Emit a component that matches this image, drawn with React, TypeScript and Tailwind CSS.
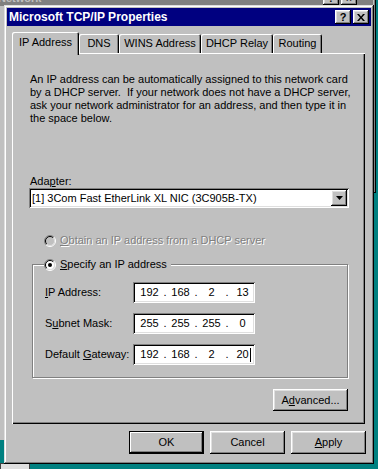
const raised =
  'shadow-[inset_-1px_-1px_0_#000,inset_1px_1px_0_#fff,inset_-2px_-2px_0_#808080,inset_2px_2px_0_#dfdfdf]';

const Radio = ({ checked, disabled }: { checked?: boolean; disabled?: boolean }) => (
  <svg width="12" height="12" viewBox="0 0 12 12" className="shrink-0">
    <circle cx="6" cy="6" r="4.5" fill={disabled ? '#c0c0c0' : '#fff'} />
    <path d="M2.1 9.9 A5.5 5.5 0 0 1 9.9 2.1" stroke="#808080" fill="none" />
    <path d="M9.9 2.1 A5.5 5.5 0 0 1 2.1 9.9" stroke="#fff" fill="none" />
    <path d="M2.8 9.2 A4.5 4.5 0 0 1 9.2 2.8" stroke="#000" fill="none" />
    <path d="M9.2 2.8 A4.5 4.5 0 0 1 2.8 9.2" stroke="#dfdfdf" fill="none" />
    {checked && <circle cx="6" cy="6" r="2" fill="#000" />}
  </svg>
);

const IpBox = ({ parts, cursor }: { parts: string[]; cursor?: boolean }) => (
  <div className="flex h-[21px] w-[122px] items-center bg-white pl-[3px] shadow-[inset_1px_1px_0_#808080,inset_-1px_-1px_0_#fff,inset_2px_2px_0_#000,inset_-2px_-2px_0_#dfdfdf]">
    {parts.map((p, i) => (
      <div key={i} className="flex items-center">
        <span className="w-[27px] text-center">
          <span className="relative">
            {p}
            {cursor && i === 3 && <span className="absolute left-full top-0 ml-[1px] h-[14px] w-px bg-black" />}
          </span>
        </span>
        {i < 3 && <span className="w-[4px] text-center">.</span>}
      </div>
    ))}
  </div>
);

const tabs = [
  { label: 'IP Address', w: 'w-[67px]' },
  { label: 'DNS', w: 'w-[40px]' },
  { label: 'WINS Address', w: 'w-[82px]' },
  { label: 'DHCP Relay', w: 'w-[72px]' },
  { label: 'Routing', w: 'w-[49px]' },
];

export default function App() {
  return (
    <div className="relative h-[469px] w-[378px] overflow-hidden bg-[#008080] font-['Liberation_Sans',Arial,sans-serif] text-[11px] leading-[13px] text-black">
      {/* window behind */}
      <div className="absolute left-[-6px] top-[-12px] h-[205px] w-[382px] bg-[#c0c0c0] shadow-[inset_-1px_-1px_0_#000,inset_-2px_-2px_0_#808080]">
        <div className="mx-[3px] mt-[2px] flex h-[16px] items-center justify-between bg-[#808080] pl-[1px] pr-[16px]">
          <span className="font-bold text-[#c0c0c0]">Network</span>
          <div className="flex gap-[2px]">
            <div className={`flex h-[14px] w-[16px] items-center justify-center bg-[#c0c0c0] text-[10px] font-bold ${raised}`}>?</div>
            <div className={`flex h-[14px] w-[16px] items-center justify-center bg-[#c0c0c0] text-[10px] font-bold ${raised}`}>×</div>
          </div>
        </div>
      </div>
      <div className="absolute left-[-6px] top-[150px] h-[290px] w-[10px] bg-[#c0c0c0]" />
      <div className="absolute left-0 top-[463px] h-[10px] w-[30px] border border-[#404040] bg-[#dfdfdf]" />

      {/* dialog */}
      <div className="absolute left-[4px] top-[5px] flex h-[459px] w-[370px] flex-col bg-[#c0c0c0] p-[3px] shadow-[inset_-1px_-1px_0_#000,inset_1px_1px_0_#dfdfdf,inset_-2px_-2px_0_#808080,inset_2px_2px_0_#fff]">
        <div className="flex h-[18px] items-center justify-between bg-[#000080] pl-[2px] pr-[2px]">
          <span className="text-[12px] font-bold text-white">Microsoft TCP/IP Properties</span>
          <div className="flex gap-[2px]">
            <div className={`flex h-[14px] w-[16px] items-center justify-center bg-[#c0c0c0] text-[11px] font-bold ${raised}`}>?</div>
            <div className={`flex h-[14px] w-[16px] items-center justify-center bg-[#c0c0c0] ${raised}`}>
              <svg width="8" height="7" viewBox="0 0 8 7">
                <path d="M0 0h2l2 2.5L6 0h2L5 3.5 8 7H6L4 4.5 2 7H0l3-3.5z" fill="#000" />
              </svg>
            </div>
          </div>
        </div>

        <div className="flex flex-1 flex-col px-[5px] pt-[6px]">
          {/* tabs */}
          <div className="flex h-[21px] items-end">
            {tabs.map((t, i) => (
              <div
                key={t.label}
                className={`${t.w} flex items-center justify-center rounded-t-[2px] bg-[#c0c0c0] ${
                  i === 0
                    ? 'relative z-10 -mb-[2px] h-[23px] pb-[2px] shadow-[inset_1px_1px_0_#fff,inset_-1px_0_0_#000,inset_-2px_0_0_#808080]'
                    : 'h-[19px] shadow-[inset_1px_1px_0_#fff,inset_-1px_0_0_#000,inset_-2px_0_0_#808080]'
                }`}
              >
                {t.label}
              </div>
            ))}
          </div>

          {/* panel */}
          <div className="flex h-[371px] w-[353px] flex-col pl-[17px] pt-[20px] shadow-[inset_1px_1px_0_#fff,inset_-1px_-1px_0_#000,inset_-2px_-2px_0_#808080]">
            <p className="ml-[1px] whitespace-nowrap">
              An IP address can be automatically assigned to this network card
              <br />
              by a DHCP server.&nbsp; If your network does not have a DHCP server,
              <br />
              ask your network administrator for an address, and then type it in
              <br />
              the space below.
            </p>

            <div className="ml-[1px] mt-[50px]">
              Ada<u>p</u>ter:
            </div>
            <div className="flex h-[20px] w-[320px] items-center justify-between bg-white pl-[3px] pr-[2px] shadow-[inset_1px_1px_0_#808080,inset_-1px_-1px_0_#fff,inset_2px_2px_0_#000,inset_-2px_-2px_0_#dfdfdf]">
              <span>[1] 3Com Fast EtherLink XL NIC (3C905B-TX)</span>
              <div className={`flex h-[16px] w-[16px] items-center justify-center bg-[#c0c0c0] ${raised}`}>
                <svg width="7" height="4" viewBox="0 0 7 4">
                  <path d="M0 0h7L3.5 4z" fill="#000" />
                </svg>
              </div>
            </div>

            <div className="ml-[15px] mt-[26px] flex items-center gap-[4px] text-[#808080] [text-shadow:1px_1px_0_#fff]">
              <Radio disabled />
              <span>
                <u>O</u>btain an IP address from a DHCP server
              </span>
            </div>

            <div className="ml-[3px] mt-[17px] flex w-[316px] flex-col border border-[#808080] pb-[12px] shadow-[inset_1px_1px_0_#fff,1px_1px_0_#fff]">
              <div className="ml-[11px] -mt-[7px] flex w-fit items-center gap-[4px] bg-[#c0c0c0] pr-[4px]">
                <Radio checked />
                <span>
                  <u>S</u>pecify an IP address
                </span>
              </div>
              <div className="mt-[11px] flex flex-col gap-[10px]">
                <div className="flex items-center">
                  <span className="w-[100px] pl-[12px]">
                    <u>I</u>P Address:
                  </span>
                  <IpBox parts={['192', '168', '2', '13']} />
                </div>
                <div className="flex items-center">
                  <span className="w-[100px] pl-[12px]">
                    S<u>u</u>bnet Mask:
                  </span>
                  <IpBox parts={['255', '255', '255', '0']} />
                </div>
                <div className="flex items-center">
                  <span className="w-[100px] pl-[12px]">
                    Default <u>G</u>ateway:
                  </span>
                  <IpBox parts={['192', '168', '2', '20']} cursor />
                </div>
              </div>
            </div>

            <div className={`ml-[244px] mt-[11px] flex h-[22px] w-[75px] items-center justify-center bg-[#c0c0c0] ${raised}`}>
              A<u>d</u>vanced...
            </div>
          </div>

          {/* buttons */}
          <div className="mt-[7px] flex justify-end gap-[6px]">
            <div className="flex h-[23px] w-[75px] items-center justify-center bg-[#c0c0c0] shadow-[inset_0_0_0_1px_#000,inset_-2px_-2px_0_#000,inset_2px_2px_0_#fff,inset_-3px_-3px_0_#808080]">
              OK
            </div>
            <div className={`flex h-[23px] w-[75px] items-center justify-center bg-[#c0c0c0] ${raised}`}>Cancel</div>
            <div className={`flex h-[23px] w-[75px] items-center justify-center bg-[#c0c0c0] ${raised}`}>
              <u>A</u>pply
            </div>
          </div>
        </div>
      </div>
    </div>
  );
}
